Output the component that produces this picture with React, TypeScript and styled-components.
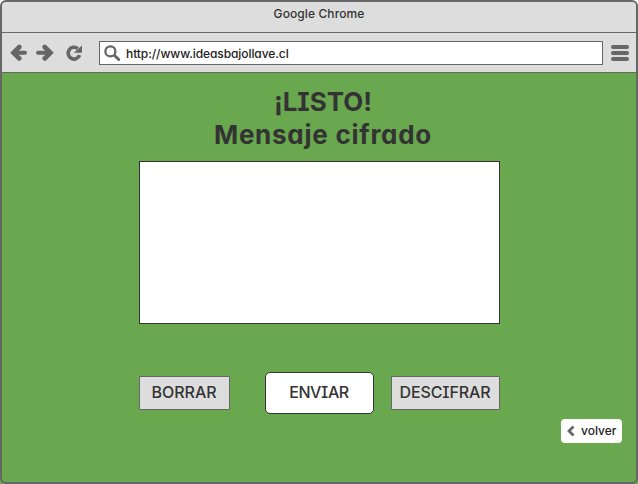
import React from 'react';
import styled, { createGlobalStyle } from 'styled-components';

const GlobalStyle = createGlobalStyle`
  * { box-sizing: border-box; }
  body { margin: 0; background: linear-gradient(#fff 50%, #6aa84f 50%); }
`;

const Label = styled.span<{ $size: number; $spacing?: number }>`
  font-size: ${p => p.$size}px;
  font-weight: 500;
  line-height: 20px;
  letter-spacing: ${p => p.$spacing ?? 0}px;
  white-space: nowrap;
`;

const Window = styled.div`
  display: flex;
  flex-direction: column;
  width: 638px;
  height: 484px;
  border: 2px solid #666;
  border-radius: 6px;
  overflow: hidden;
  background: #6aa84f;
  color: #333;
  font-family: Inter, "Liberation Sans", sans-serif;
  font-feature-settings: "cv11", "cv08";
`;

const TitleBar = styled.header`
  display: flex;
  justify-content: center;
  height: 31px;
  padding-top: 2px;
  background: #ddd;
  border-bottom: 1px solid #666;
`;

const Toolbar = styled.nav`
  display: flex;
  align-items: flex-start;
  height: 40px;
  padding: 8px 6px 0 8px;
  background: #ddd;
  border-bottom: 1px solid #666;
  color: #666;
`;

const NavIcons = styled.div`
  display: flex;
  flex-shrink: 0;
  height: 24px;
  width: 89px;
  align-items: center;
`;

const AddressBar = styled.div`
  display: flex;
  flex-shrink: 0;
  align-items: center;
  width: 504px;
  height: 24px;
  padding-left: 4px;
  gap: 5px;
  border: 1px solid #666;
  background: #fff;
`;

const UrlText = styled(Label)`
  padding-top: 1px;
  color: #222;
`;

const MenuIcon = styled.svg`
  flex-shrink: 0;
  margin: 3px 0 0 7px;
`;

const Content = styled.main`
  display: flex;
  flex-direction: column;
  align-items: flex-start;
  flex: 1;
  padding: 12px 14px 0 137px;
`;

const Heading = styled.h1`
  width: 361px;
  height: 76px;
  margin: 0;
  padding-left: 7px;
  text-align: center;
  font-size: 26px;
  line-height: 33px;
  font-weight: 700;
  white-space: nowrap;
`;

const Line = styled.span<{ $spacing: number }>`
  display: block;
  letter-spacing: ${p => p.$spacing}px;
`;

const Message = styled.textarea`
  display: block;
  width: 361px;
  height: 163px;
  border: 1px solid #333;
  background: #fff;
  resize: none;
  outline: none;
`;

const Actions = styled.div`
  display: grid;
  grid-template-columns: repeat(3, 109px);
  column-gap: 17px;
  align-items: center;
  width: 361px;
  margin-top: 48px;
`;

const Button = styled.button<{ $width: number; $primary?: boolean }>`
  display: flex;
  align-items: center;
  justify-content: center;
  width: ${p => p.$width}px;
  height: ${p => (p.$primary ? 42 : 34)}px;
  padding: 0 1px 2px 0;
  border: 1px solid ${p => (p.$primary ? '#333' : '#666')};
  border-radius: ${p => (p.$primary ? 5 : 1)}px;
  background: ${p => (p.$primary ? '#fff' : '#ddd')};
  color: #333;
  font: inherit;
  font-feature-settings: inherit;
`;

const BackButton = styled.button`
  display: flex;
  align-items: center;
  align-self: flex-end;
  gap: 6px;
  width: 61px;
  height: 24px;
  margin-top: 5px;
  padding: 0 0 0 6px;
  border: 0;
  border-radius: 4px;
  background: #fff;
  color: #222;
  font: inherit;
  font-feature-settings: inherit;
`;

export default function App() {
  return (
    <>
      <GlobalStyle />
      <Window>
        <TitleBar><Label $size={12} $spacing={0.1}>Google Chrome</Label></TitleBar>
        <Toolbar>
          <NavIcons>
            <svg width="74" height="18" viewBox="0 0 74 18" fill="none" stroke="currentColor" strokeWidth="4">
              <path d="M9.3 3 3.5 8.8l5.8 5.7" strokeWidth="4.6" strokeLinecap="round" />
              <path d="M4 8.8h11" strokeLinecap="round" />
              <path d="M34.7 3l5.8 5.8-5.8 5.7" strokeWidth="4.6" strokeLinecap="round" />
              <path d="M40 8.8H28" strokeLinecap="round" />
              <path d="M67.8 4.6A5.9 5.9 0 1 0 69.6 11.2" strokeWidth="3.6" />
              <path d="M72 1.5v7.3h-8.2z" fill="currentColor" stroke="none" />
            </svg>
          </NavIcons>
          <AddressBar>
            <svg width="17" height="17" viewBox="0 0 17 17" fill="none" stroke="#666">
              <circle cx="6.4" cy="6.4" r="5" strokeWidth="2.3" />
              <path d="M10.5 10.5l4.2 4" strokeWidth="3" strokeLinecap="round" />
            </svg>
            <UrlText $size={12} $spacing={-0.08}>http://www.ideasbajollave.cl</UrlText>
          </AddressBar>
          <MenuIcon width="19" height="18" viewBox="0 0 19 18" fill="currentColor">
            <rect x="1" y="1" width="18" height="4" rx="2" />
            <rect x="1" y="7" width="18" height="4" rx="2" />
            <rect x="1" y="13" width="18" height="4" rx="2" />
          </MenuIcon>
        </Toolbar>
        <Content>
          <Heading>
            <Line $spacing={0}>¡LISTO!</Line>
            <Line $spacing={0.75}>Mensaje cifrado</Line>
          </Heading>
          <Message aria-label="Mensaje cifrado" />
          <Actions>
            <Button $width={91}><Label $size={16}>BORRAR</Label></Button>
            <Button $width={109} $primary><Label $size={16} $spacing={-0.4}>ENVIAR</Label></Button>
            <Button $width={109}><Label $size={16} $spacing={-0.1}>DESCIFRAR</Label></Button>
          </Actions>
          <BackButton>
            <svg width="8" height="12" viewBox="0 0 8 12" fill="none" stroke="#666" strokeWidth="2.8">
              <path d="M6.5 1.5 2 6l4.5 4.5" />
            </svg>
            <Label $size={12}>volver</Label>
          </BackButton>
        </Content>
      </Window>
    </>
  );
}
